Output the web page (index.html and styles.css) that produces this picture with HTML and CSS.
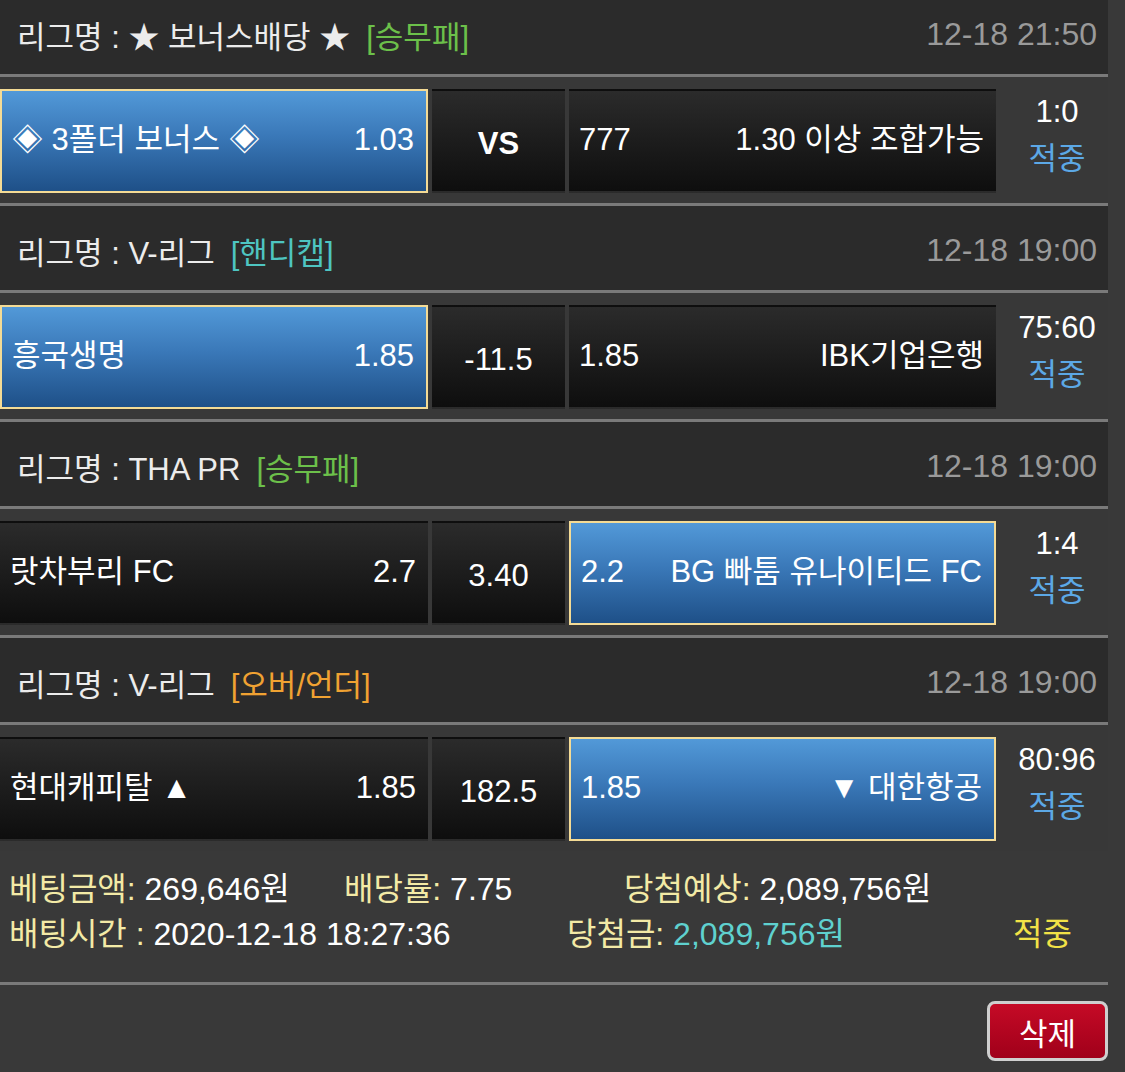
FILE: index.html
```html
<!DOCTYPE html>
<html lang="ko">
<head>
    <meta charset="UTF-8">
    <meta name="viewport" content="width=device-width, initial-scale=1.0">
    <title>배팅내역</title>
    <link rel="stylesheet" href="styles.css">
</head>
<body>
    <div class="slip">
        <div class="game">
            <div class="league">
                <span class="league-name">리그명 : ★ 보너스배당 ★</span>
                <span class="type type-win">[승무패]</span>
                <span class="time">12-18 21:50</span>
            </div>
            <div class="match">
                <div class="pick home selected">
                    <span>◈ 3폴더 보너스 ◈</span>
                    <span>1.03</span>
                </div>
                <div class="mid vs">VS</div>
                <div class="pick away">
                    <span>777</span>
                    <span>1.30 이상 조합가능</span>
                </div>
                <div class="result">
                    <span class="score">1:0</span>
                    <span class="hit">적중</span>
                </div>
            </div>
        </div>

        <div class="game">
            <div class="league">
                <span class="league-name">리그명 : V-리그</span>
                <span class="type type-handi">[핸디캡]</span>
                <span class="time">12-18 19:00</span>
            </div>
            <div class="match">
                <div class="pick home selected">
                    <span>흥국생명</span>
                    <span>1.85</span>
                </div>
                <div class="mid">-11.5</div>
                <div class="pick away">
                    <span>1.85</span>
                    <span>IBK기업은행</span>
                </div>
                <div class="result">
                    <span class="score">75:60</span>
                    <span class="hit">적중</span>
                </div>
            </div>
        </div>

        <div class="game">
            <div class="league">
                <span class="league-name">리그명 : THA PR</span>
                <span class="type type-win">[승무패]</span>
                <span class="time">12-18 19:00</span>
            </div>
            <div class="match">
                <div class="pick home">
                    <span>랏차부리 FC</span>
                    <span>2.7</span>
                </div>
                <div class="mid">3.40</div>
                <div class="pick away selected">
                    <span>2.2</span>
                    <span>BG 빠툼 유나이티드 FC</span>
                </div>
                <div class="result">
                    <span class="score">1:4</span>
                    <span class="hit">적중</span>
                </div>
            </div>
        </div>

        <div class="game last">
            <div class="league">
                <span class="league-name">리그명 : V-리그</span>
                <span class="type type-over">[오버/언더]</span>
                <span class="time">12-18 19:00</span>
            </div>
            <div class="match">
                <div class="pick home">
                    <span>현대캐피탈 ▲</span>
                    <span>1.85</span>
                </div>
                <div class="mid">182.5</div>
                <div class="pick away selected">
                    <span>1.85</span>
                    <span>▼ 대한항공</span>
                </div>
                <div class="result">
                    <span class="score">80:96</span>
                    <span class="hit">적중</span>
                </div>
            </div>
        </div>

        <div class="summary">
            <div class="summary-row first">
                <span><em>베팅금액:</em> 269,646원</span>
                <span><em>배당률:</em> 7.75</span>
                <span><em>당첨예상:</em> 2,089,756원</span>
            </div>
            <div class="summary-row second">
                <span><em>배팅시간 :</em> 2020-12-18 18:27:36</span>
                <span><em>당첨금:</em> <b class="won">2,089,756원</b></span>
                <span class="status">적중</span>
            </div>
        </div>

        <div class="actions">
            <button type="button" class="btn-delete">삭제</button>
        </div>
    </div>
</body>
</html>
```

FILE: styles.css
```css
* {
    margin: 0;
    padding: 0;
    box-sizing: border-box;
    font-family: "Liberation Sans", "Noto Sans CJK KR", sans-serif;
}

body {
    background-color: #393939;
    color: #fff;
    overflow: hidden;
}

.slip {
    width: 1108px;
    margin-top: -10px;
}

.league {
    display: flex;
    align-items: center;
    height: 87px;
    padding: 4px 11px 0 17px;
    background-color: #2b2b2b;
    border-bottom: 3px solid #7a7a7a;
    font-size: 31px;
    color: #ececec;
}

.type {
    margin-left: 16px;
}

.type-win {
    color: #6cc04a;
}

.type-handi {
    color: #4ec5c1;
}

.type-over {
    color: #f0a232;
}

.time {
    margin-left: auto;
    font-size: 32px;
    color: #9a9a9a;
}

.match {
    display: flex;
    height: 129px;
    padding: 12px 0 10px;
    background-color: #383838;
    border-bottom: 3px solid #7a7a7a;
    font-size: 31px;
}

.game.last .match {
    height: 126px;
    border-bottom: none;
}

.pick,
.mid {
    height: 104px;
    border: 2px solid transparent;
    background: linear-gradient(#2b2b2b, #0e0e0e);
}

/* baseline alignment keeps latin digits and hangul on one line */
.pick {
    display: flex;
    align-items: baseline;
    justify-content: space-between;
    padding: 23px 10px 0 8px;
}

.home {
    width: 428px;
}

.away {
    width: 427px;
}

.mid {
    width: 133px;
    margin: 0 4px;
    display: flex;
    align-items: baseline;
    justify-content: center;
    padding-top: 35px;
}

.mid.vs {
    font-weight: bold;
}

.selected {
    border-color: #f4db95;
    background: linear-gradient(#5299d8, #3a78b8 45%, #1e5088);
    padding: 23px 12px 0 10px;
}

.result {
    flex: 1;
    display: flex;
    flex-direction: column;
    align-items: center;
    padding-left: 10px;
}

.score {
    line-height: 46px;
    color: #fff;
}

.hit {
    line-height: 48px;
    color: #5ca8e6;
}

.summary {
    padding: 12px 0 29px 9px;
    border-bottom: 3px solid #7a7a7a;
    font-size: 32px;
}

.summary-row {
    display: grid;
    height: 45px;
    align-items: center;
}

.summary-row.first {
    grid-template-columns: 335px 280px auto;
}

.summary-row.second {
    grid-template-columns: 558px 446px auto;
}

.summary em {
    font-style: normal;
    color: #f3eaa6;
}

.summary .won {
    font-weight: normal;
    color: #5fd1cf;
}

.summary .status {
    color: #f2e247;
}

.actions {
    display: flex;
    justify-content: flex-end;
    padding-top: 16px;
}

.btn-delete {
    width: 121px;
    height: 60px;
    border: 3px solid #cfcfcf;
    border-radius: 8px;
    background: linear-gradient(#c50a26, #a0001a);
    color: #fff;
    font-size: 31px;
    cursor: pointer;
}

.btn-delete:hover {
    background: #8c0016;
}
```
